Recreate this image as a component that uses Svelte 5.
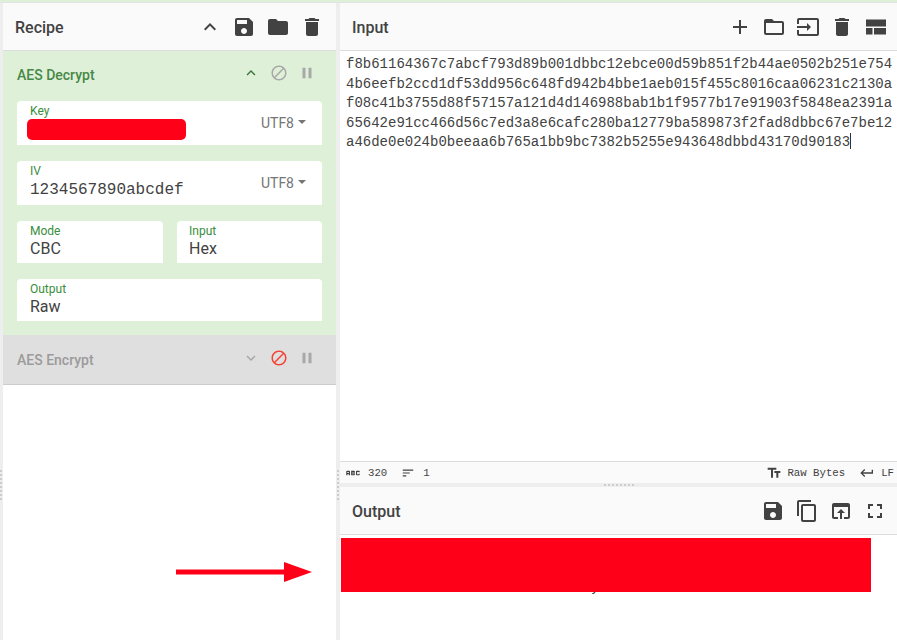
<script>
    const inputText = 'f8b61164367c7abcf793d89b001dbbc12ebce00d59b851f2b44ae0502b251e7544b6eefb2ccd1df53dd956c648fd942b4bbe1aeb015f455c8016caa06231c2130af08c41b3755d88f57157a121d4d146988bab1b1f9577b17e91903f5848ea2391a65642e91cc466d56c7ed3a8e6cafc280ba12779ba589873f2fad8dbbc67e7be12a46de0e024b0beeaa6b765a1bb9bc7382b5255e943648dbbd43170d90183';

    const icons = {
        up: 'M7.41 15.41L12 10.83l4.59 4.58L18 14l-6-6-6 6z',
        down: 'M7.41 8.59L12 13.17l4.59-4.58L18 10l-6 6-6-6z',
        save: 'M17 3H5c-1.11 0-2 .9-2 2v14c0 1.1.89 2 2 2h14c1.1 0 2-.9 2-2V7l-4-4zm-5 16c-1.66 0-3-1.34-3-3s1.34-3 3-3 3 1.34 3 3-1.34 3-3 3zm3-10H5V5h10v4z',
        folder: 'M10 4H4c-1.1 0-1.99.9-1.99 2L2 18c0 1.1.9 2 2 2h16c1.1 0 2-.9 2-2V8c0-1.1-.9-2-2-2h-8l-2-2z',
        folderOpen: 'M20 6h-8l-2-2H4c-1.1 0-1.99.9-1.99 2L2 18c0 1.1.9 2 2 2h16c1.1 0 2-.9 2-2V8c0-1.1-.9-2-2-2zm0 12H4V8h16v10z',
        trash: 'M6 19c0 1.1.9 2 2 2h8c1.1 0 2-.9 2-2V7H6v12zM19 4h-3.5l-1-1h-5l-1 1H5v2h14V4z',
        block: 'M12 2C6.48 2 2 6.48 2 12s4.48 10 10 10 10-4.48 10-10S17.52 2 12 2zM4 12c0-4.42 3.58-8 8-8 1.85 0 3.55.63 4.9 1.69L5.69 16.9C4.63 15.55 4 13.85 4 12zm8 8c-1.85 0-3.55-.63-4.9-1.69L18.31 7.1C19.37 8.45 20 10.15 20 12c0 4.42-3.58 8-8 8z',
        pause: 'M6 19h4V5H6v14zm8-14v14h4V5h-4z',
        add: 'M19 13h-6v6h-2v-6H5v-2h6V5h2v6h6v2z',
        input: 'M21 3.01H3c-1.1 0-2 .9-2 2V9h2V4.99h18v14.03H3V15H1v4.01c0 1.1.9 1.98 2 1.98h18c1.1 0 2-.88 2-1.98v-14c0-1.11-.9-2-2-2zM11 16l4-4-4-4v3H1v2h10v3z',
        layout: 'M2 4.5h20v7H2zM2 13h6.5v6.5H2zM10 13h12v6.5H10z',
        copy: 'M16 1H4c-1.1 0-2 .9-2 2v14h2V3h12V1zm3 4H8c-1.1 0-2 .9-2 2v14c0 1.1.9 2 2 2h11c1.1 0 2-.9 2-2V7c0-1.1-.9-2-2-2zm0 16H8V7h11v14z',
        openIn: 'M19 4H5c-1.11 0-2 .9-2 2v12c0 1.1.89 2 2 2h4v-2H5V8h14v10h-4v2h4c1.1 0 2-.9 2-2V6c0-1.1-.89-2-2-2zm-7 6l-4 4h3v6h2v-6h3l-4-4z',
        fullscreen: 'M7 14H5v5h5v-2H7v-3zm-2-4h2V7h3V5H5v5zm12 7h-3v2h5v-5h-2v3zM14 5v2h3v3h2V5h-5z',
        textFields: 'M2.5 4v3h5v12h3V7h5V4h-13zm19 5h-9v3h3v7h3v-7h3V9z',
        sort: 'M3 18h6v-2H3v2zM3 6v2h18V6H3zm0 7h12v-2H3v2z',
        ret: 'M19 7v4H5.83l3.58-3.59L8 6l-6 6 6 6 1.41-1.41L5.83 13H21V7z',
        abc: 'M21 11h-1.5v-.5h-2v3h2V13H21v1c0 .55-.45 1-1 1h-3c-.55 0-1-.45-1-1v-4c0-.55.45-1 1-1h3c.55 0 1 .45 1 1v1zM8 10v5H6.5v-1.5h-2V15H3v-5c0-.55.45-1 1-1h3c.55 0 1 .45 1 1zm-1.5.5h-2V12h2v-1.5zm7 1.5c.55 0 1 .45 1 1v1c0 .55-.45 1-1 1h-4V9h4c.55 0 1 .45 1 1v1c0 .55-.45 1-1 1zM11 10.5v.75h2v-.75h-2zm2 2.25h-2v.75h2v-.75z'
    };
</script>

{#snippet icon(name, size = 24)}
    <svg class="icon" width={size} height={size} viewBox="0 0 24 24" fill="currentColor"><path d={icons[name]} /></svg>
{/snippet}

<div class="page">
    <div class="topline"></div>
    <div class="columns">
        <div class="edge"><span class="grip-v"></span></div>

        <section class="recipe">
            <header class="bar">
                <span class="title">Recipe</span>
                <div class="bar-icons recipe-icons">
                    {@render icon('up', 24)}
                    {@render icon('save', 24)}
                    {@render icon('folder', 24)}
                    {@render icon('trash', 24)}
                </div>
            </header>

            <div class="op active">
                <div class="op-head">
                    <span class="op-name">AES Decrypt</span>
                    <div class="op-icons">
                        <span class="arrow-green">{@render icon('up', 18)}</span>
                        <span class="muted">{@render icon('block', 18)}</span>
                        <span class="muted">{@render icon('pause', 18)}</span>
                    </div>
                </div>
                <div class="args">
                    <div class="field wide tall">
                        <div class="field-main">
                            <span class="field-label">Key</span>
                            <div class="redact-key"></div>
                        </div>
                        <span class="encoding">UTF8<i class="caret"></i></span>
                    </div>
                    <div class="field wide tall">
                        <div class="field-main">
                            <span class="field-label">IV</span>
                            <span class="value mono">1234567890abcdef</span>
                        </div>
                        <span class="encoding">UTF8<i class="caret"></i></span>
                    </div>
                    <div class="field">
                        <div class="field-main">
                            <span class="field-label">Mode</span>
                            <span class="value">CBC</span>
                        </div>
                    </div>
                    <div class="field second">
                        <div class="field-main">
                            <span class="field-label">Input</span>
                            <span class="value">Hex</span>
                        </div>
                    </div>
                    <div class="field wide">
                        <div class="field-main">
                            <span class="field-label">Output</span>
                            <span class="value">Raw</span>
                        </div>
                    </div>
                </div>
            </div>

            <div class="op disabled">
                <div class="op-head">
                    <span class="op-name">AES Encrypt</span>
                    <div class="op-icons">
                        <span class="muted">{@render icon('down', 18)}</span>
                        <span class="red">{@render icon('block', 18)}</span>
                        <span class="muted">{@render icon('pause', 18)}</span>
                    </div>
                </div>
            </div>
        </section>

        <div class="gutter"><span class="grip-v"></span></div>

        <section class="io">
            <header class="bar">
                <span class="title">Input</span>
                <div class="bar-icons io-icons">
                    {@render icon('add', 24)}
                    {@render icon('folderOpen', 24)}
                    {@render icon('input', 24)}
                    {@render icon('trash', 24)}
                    {@render icon('layout', 24)}
                </div>
            </header>
            <div class="input-text">{inputText}<span class="cursor"></span></div>
            <footer class="status">
                <div class="stat-group">
                    {@render icon('abc', 18)}
                    <span class="stat-num">320</span>
                    <span class="sort-icon">{@render icon('sort', 14)}</span>
                    <span>1</span>
                </div>
                <div class="stat-group">
                    {@render icon('textFields', 16)}
                    <span class="raw">Raw Bytes</span>
                    <span class="ret-icon">{@render icon('ret', 16)}</span>
                    <span>LF</span>
                </div>
            </footer>
            <div class="splitter"><span class="grip"></span></div>
            <header class="bar">
                <span class="title">Output</span>
                <div class="bar-icons out-icons">
                    {@render icon('save', 24)}
                    {@render icon('copy', 24)}
                    {@render icon('openIn', 24)}
                    {@render icon('fullscreen', 24)}
                </div>
            </header>
            <div class="output-text">
                <div class="redact-out"></div>
                <span class="peek">y</span>
            </div>
        </section>
    </div>

    <svg class="pointer" width="140" height="24" viewBox="0 0 140 24">
        <rect x="0" y="9.5" width="110" height="5" fill="#ff0019" />
        <polygon points="108,2 108,22 136,12" fill="#ff0019" />
    </svg>
</div>

<style>
    :global(body) {
        margin: 0;
        background: #fff;
    }

    .page {
        position: relative;
        width: 897px;
        height: 640px;
        overflow: hidden;
        font-family: Roboto, sans-serif;
        color: #424242;
    }

    .topline {
        height: 2px;
        background: #dff0d8;
        border-bottom: 1px solid #e3e3e3;
    }

    .columns {
        display: flex;
        height: 637px;
    }

    .edge {
        width: 3px;
        flex-shrink: 0;
        background: #eee;
        position: relative;
    }

    .recipe {
        width: 333px;
        flex-shrink: 0;
        background: #fff;
    }

    .gutter {
        width: 4px;
        flex-shrink: 0;
        background: #eee;
        position: relative;
    }

    .grip-v {
        position: absolute;
        left: 0;
        top: 467px;
        width: 2px;
        height: 31px;
        background: repeating-linear-gradient(to bottom, #ccc 0 2px, transparent 2px 4px);
    }

    .gutter .grip-v {
        left: 1px;
    }

    .io {
        flex: 1;
        min-width: 0;
        display: flex;
        flex-direction: column;
    }

    .bar {
        height: 48px;
        flex-shrink: 0;
        box-sizing: border-box;
        display: flex;
        align-items: center;
        justify-content: space-between;
        background: #fafafa;
        border-bottom: 1px solid #ddd;
    }

    .title {
        font-size: 16px;
        font-weight: 500;
        color: #424242;
        padding: 1px 0 0 12px;
    }

    .bar-icons {
        display: flex;
        align-items: center;
    }

    .recipe-icons {
        gap: 10px;
        padding-right: 12px;
    }

    .io-icons {
        gap: 10px;
        padding-right: 9px;
    }

    .out-icons {
        gap: 10px;
        padding-right: 10px;
    }

    .icon {
        display: block;
    }

    .op {
        box-sizing: border-box;
    }

    .active {
        height: 284px;
        background: #dff0d8;
        color: #468847;
    }

    .disabled {
        height: 50px;
        background: #dfdfdf;
        color: #9b9b9b;
        border-bottom: 1px solid #ccc;
    }

    .op-head {
        height: 49px;
        box-sizing: border-box;
        display: flex;
        align-items: center;
        justify-content: space-between;
    }

    .active .op-head {
        height: 50px;
        padding-bottom: 2px;
    }

    .op-name {
        font-size: 14px;
        font-weight: 500;
        padding-left: 14px;
    }

    .op-icons {
        display: flex;
        align-items: center;
        gap: 10px;
        padding-right: 20px;
        margin-top: -3px;
    }

    .active .op-icons {
        margin-top: -5px;
    }

    .arrow-green {
        color: #3c763d;
    }

    .muted {
        color: #a8a8a8;
    }

    .red {
        color: #f44336;
    }

    .args {
        display: grid;
        grid-template-columns: 146px 145px;
        column-gap: 14px;
        row-gap: 16px;
        padding: 0 14px;
    }

    .field {
        height: 42px;
        box-sizing: border-box;
        background: #fff;
        border-radius: 4px 4px 0 0;
        display: flex;
        align-items: center;
        justify-content: space-between;
        padding: 3px 16px 0 13px;
    }

    .tall {
        height: 44px;
    }

    .wide {
        grid-column: 1 / 3;
    }

    .second {
        padding-left: 12px;
    }

    .field-main {
        display: flex;
        flex-direction: column;
        align-self: flex-start;
        min-width: 0;
    }

    .field-label {
        font-size: 12px;
        line-height: 14px;
        color: #388e3c;
    }

    .value {
        font-size: 16px;
        line-height: 21px;
        color: #424242;
    }

    .mono {
        font-family: "Liberation Mono", monospace;
        padding-top: 2px;
        white-space: nowrap;
    }

    .redact-key {
        width: 159px;
        height: 21px;
        margin: 1px 0 0 -3px;
        background: #ff0019;
        border-radius: 5px;
    }

    .encoding {
        font-size: 14px;
        color: #757575;
        display: flex;
        align-items: center;
        margin-top: -3px;
    }

    .caret {
        width: 0;
        height: 0;
        margin-left: 4px;
        margin-top: -2px;
        border-left: 4px solid transparent;
        border-right: 4px solid transparent;
        border-top: 4px solid #757575;
    }

    .input-text {
        flex: 1;
        min-height: 0;
        padding: 4px 1px 0 6px;
        font-family: "Liberation Mono", monospace;
        font-size: 14px;
        line-height: 19.6px;
        color: #424242;
        word-break: break-all;
        background: #fff;
    }

    .cursor {
        display: inline-block;
        width: 1px;
        height: 16px;
        background: #333;
        vertical-align: -3px;
    }

    .status {
        height: 22px;
        box-sizing: border-box;
        flex-shrink: 0;
        display: flex;
        align-items: center;
        justify-content: space-between;
        padding: 0 3px 0 4px;
        background: #fafafa;
        border-top: 1px solid #ddd;
        font-family: "Liberation Mono", monospace;
        font-size: 10.7px;
        color: #424242;
    }

    .stat-group {
        display: flex;
        align-items: center;
    }

    .stat-num {
        margin-left: 6px;
    }

    .sort-icon {
        margin: 0 8px 0 14px;
    }

    .raw {
        margin-left: 5px;
    }

    .ret-icon {
        margin: 0 6px 0 14px;
    }

    .splitter {
        height: 4px;
        flex-shrink: 0;
        background: #eee;
        position: relative;
    }

    .grip {
        position: absolute;
        left: 264px;
        top: 1px;
        width: 31px;
        height: 2px;
        background: repeating-linear-gradient(to right, #ccc 0 2px, transparent 2px 4px);
    }

    .output-text {
        height: 105px;
        flex-shrink: 0;
        box-sizing: border-box;
        position: relative;
        background: #fff;
        padding: 3px 0 0 1px;
    }

    /* the cover sits over the output text, only the tail of the y shows below it */
    .redact-out {
        position: relative;
        z-index: 1;
        width: 530px;
        height: 54px;
        background: #ff0019;
    }

    .peek {
        position: absolute;
        left: 251px;
        top: 44px;
        font-family: "Liberation Mono", monospace;
        font-size: 14px;
        line-height: 16px;
        color: #424242;
    }

    .pointer {
        position: absolute;
        left: 176px;
        top: 560px;
    }
</style>
